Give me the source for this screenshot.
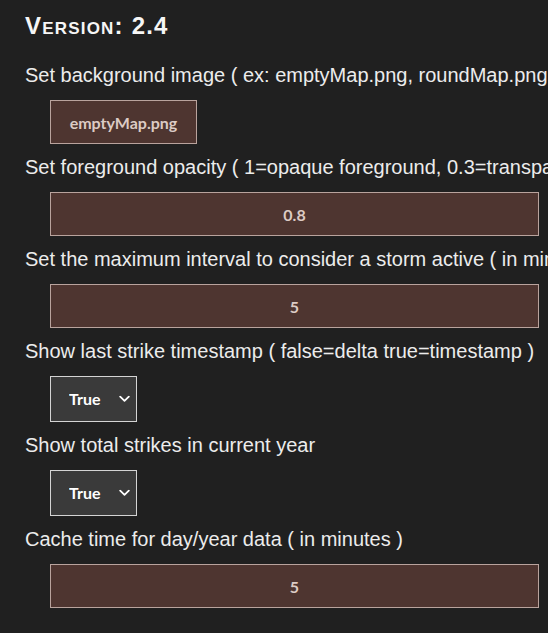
import { useState } from 'react';

interface Field {
    id: string;
    label: string;
    kind: 'text' | 'bool';
    value: string;
    wide?: boolean;
}

const fields: Field[] = [
    { id: 'bg', label: 'Set background image ( ex: emptyMap.png, roundMap.png )', kind: 'text', value: 'emptyMap.png' },
    { id: 'opacity', label: 'Set foreground opacity ( 1=opaque foreground, 0.3=transparent foreground )', kind: 'text', value: '0.8', wide: true },
    { id: 'storm', label: 'Set the maximum interval to consider a storm active ( in minutes )', kind: 'text', value: '5', wide: true },
    { id: 'stamp', label: 'Show last strike timestamp ( false=delta true=timestamp )', kind: 'bool', value: 'true' },
    { id: 'total', label: 'Show total strikes in current year', kind: 'bool', value: 'true' },
    { id: 'cache', label: 'Cache time for day/year data ( in minutes )', kind: 'text', value: '5', wide: true },
];

function Chevron() {
    return (
        <svg width="11" height="7" viewBox="0 0 11 7" fill="none" className="pointer-events-none absolute right-[7px] top-1/2 -translate-y-1/2">
            <path d="M1.2 1.2 L5.5 5.3 L9.8 1.2" stroke="#ffffff" strokeWidth="1.8" strokeLinecap="round" strokeLinejoin="round" />
        </svg>
    );
}

export default function App() {
    const [values, setValues] = useState<Record<string, string>>(() =>
        fields.reduce((acc, f) => {
            acc[f.id] = f.value;
            return acc;
        }, {} as Record<string, string>)
    );

    const update = (id: string, v: string) => setValues(prev => ({ ...prev, [id]: v }));

    return (
        <div className="h-[633px] w-full overflow-hidden bg-[#202020] pl-[25px] pr-[9px] pt-[12px] font-['Liberation_Sans',Arial,sans-serif]">
            <h1 className="text-[24px] leading-[28px] font-bold tracking-[1.2px] text-[#f6f6f6] [font-variant:small-caps]">
                Version: 2.4
            </h1>

            <div className="mt-[23px]">
                {fields.map(f => (
                    <div key={f.id} className="mb-[11px]">
                        <label htmlFor={f.id} className="block whitespace-nowrap text-[20px] leading-[24px] text-[#ececec]">
                            {f.label}
                        </label>
                        <div className="mt-[13px] pl-[25px]">
                            {f.kind === 'text' ? (
                                <input
                                    id={f.id}
                                    value={values[f.id]}
                                    onChange={e => update(f.id, e.target.value)}
                                    className={`${f.wide ? 'w-full' : 'w-[147px]'} h-[44px] border border-[#b9a39d] bg-[#4e3530] text-center text-[16px] font-bold text-[#dccbc4] outline-none font-['Lato',sans-serif]`}
                                />
                            ) : (
                                <div className="relative w-[87px]">
                                    <select
                                        id={f.id}
                                        value={values[f.id]}
                                        onChange={e => update(f.id, e.target.value)}
                                        className="h-[46px] w-[87px] appearance-none border border-[#d4d4d4] bg-[#3a3a3a] pl-[18px] text-[16px] font-bold text-white outline-none font-['Lato',sans-serif]"
                                    >
                                        <option value="true">True</option>
                                        <option value="false">False</option>
                                    </select>
                                    <Chevron />
                                </div>
                            )}
                        </div>
                    </div>
                ))}
            </div>
        </div>
    );
}
